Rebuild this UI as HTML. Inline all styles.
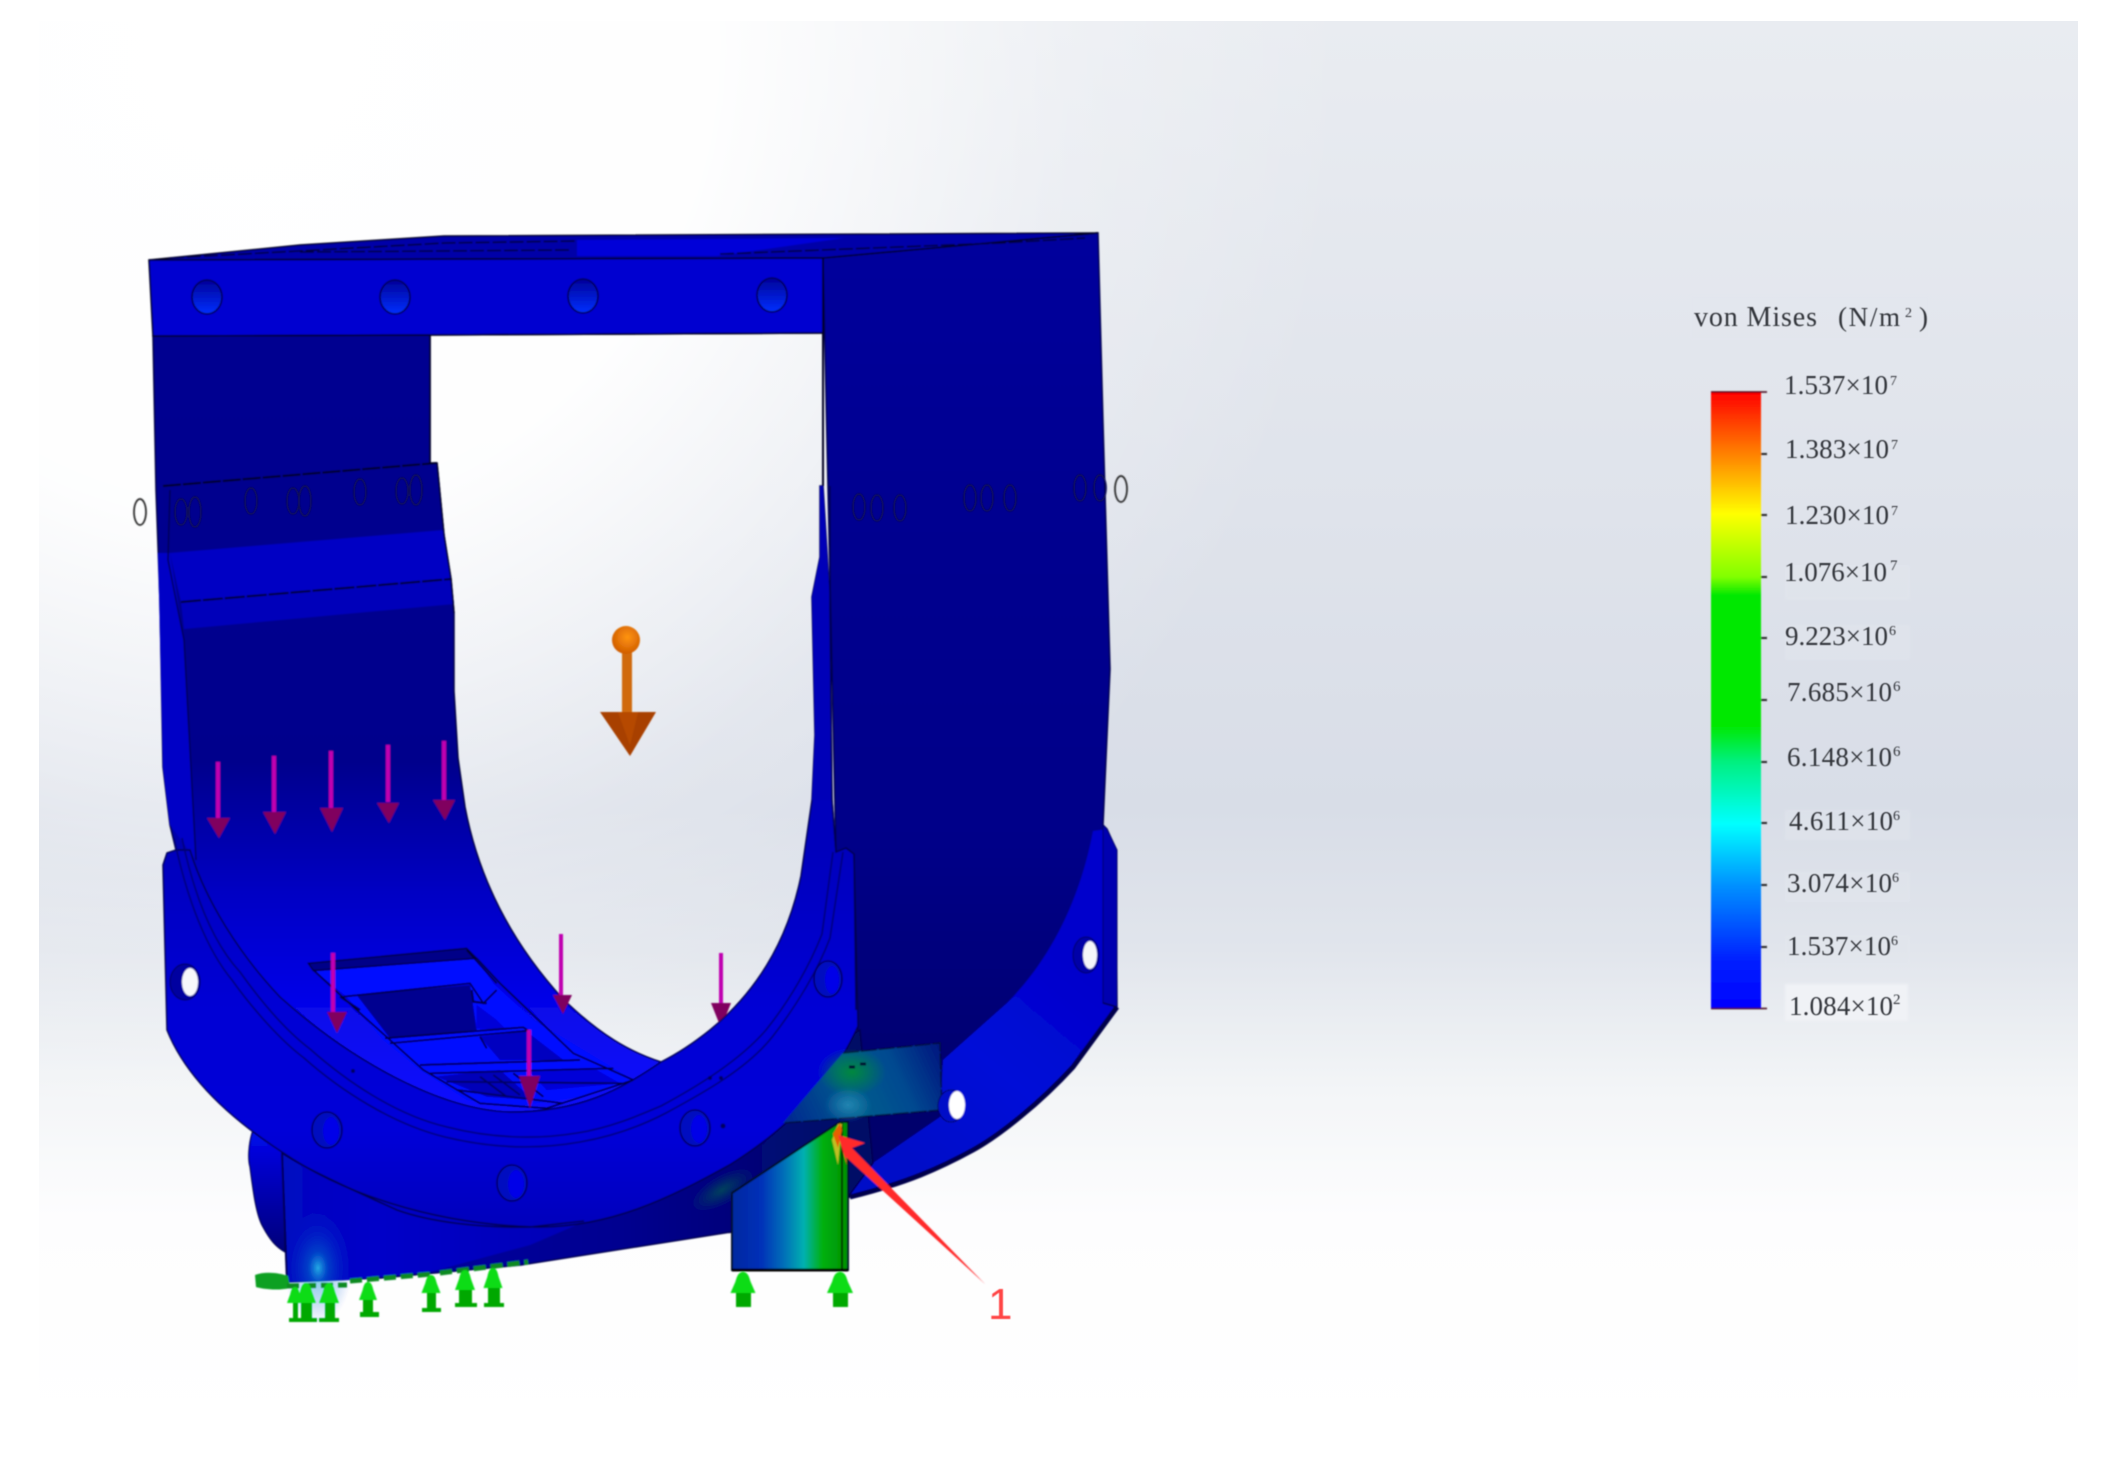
<!DOCTYPE html>
<html><head><meta charset="utf-8"><title>von Mises</title>
<style>html,body{margin:0;padding:0;background:#fff;width:2109px;height:1457px;overflow:hidden}svg{display:block}text{font-family:"Liberation Serif",serif;fill:#33353a}</style></head>
<body>
<svg width="2109" height="1457" viewBox="0 0 2109 1457" xmlns="http://www.w3.org/2000/svg">
<defs>
<linearGradient id="bg" x1="0" y1="21" x2="0" y2="1428" gradientUnits="userSpaceOnUse">
<stop offset="0" stop-color="#e9ecf1"/><stop offset=".35" stop-color="#dfe3eb"/><stop offset=".56" stop-color="#d8dde7"/><stop offset=".66" stop-color="#e1e5ec"/><stop offset=".76" stop-color="#f3f5f7"/><stop offset=".85" stop-color="#fdfdfe"/><stop offset="1" stop-color="#fff"/></linearGradient>
<radialGradient id="hl" cx="250" cy="60" r="1100" gradientUnits="userSpaceOnUse"><stop offset="0" stop-color="#fff"/><stop offset=".42" stop-color="#fff" stop-opacity=".95"/><stop offset=".75" stop-color="#fff" stop-opacity=".25"/><stop offset="1" stop-color="#fff" stop-opacity="0"/></radialGradient>
<linearGradient id="inner" x1="0" y1="336" x2="0" y2="1110" gradientUnits="userSpaceOnUse"><stop offset="0" stop-color="#000090"/><stop offset=".55" stop-color="#00008c"/><stop offset=".72" stop-color="#0000c4"/><stop offset=".86" stop-color="#0606e8"/><stop offset="1" stop-color="#0a0aff"/></linearGradient>
<linearGradient id="fl" x1="0" y1="850" x2="0" y2="1225" gradientUnits="userSpaceOnUse"><stop offset="0" stop-color="#0000bc"/><stop offset=".4" stop-color="#0404d4"/><stop offset=".75" stop-color="#0606d8"/><stop offset="1" stop-color="#0000bc"/></linearGradient>
<linearGradient id="under" x1="381" y1="0" x2="850" y2="0" gradientUnits="userSpaceOnUse"><stop offset="0" stop-color="#0000a0"/><stop offset=".5" stop-color="#000090"/><stop offset="1" stop-color="#000a66"/></linearGradient>
<linearGradient id="wedge" x1="282" y1="0" x2="600" y2="0" gradientUnits="userSpaceOnUse"><stop offset="0" stop-color="#0008c0"/><stop offset=".3" stop-color="#0000c8"/><stop offset="1" stop-color="#0000b4"/></linearGradient>
<linearGradient id="cyl" x1="0" y1="1133" x2="0" y2="1253" gradientUnits="userSpaceOnUse"><stop offset="0" stop-color="#0008ec"/><stop offset=".5" stop-color="#0000b0"/><stop offset="1" stop-color="#000078"/></linearGradient>
<linearGradient id="rear" x1="1060" y1="960" x2="900" y2="1150" gradientUnits="userSpaceOnUse"><stop offset="0" stop-color="#0000cc"/><stop offset=".5" stop-color="#060ed8"/><stop offset="1" stop-color="#0008c8"/></linearGradient>
<linearGradient id="back" x1="0" y1="240" x2="0" y2="1100" gradientUnits="userSpaceOnUse"><stop offset="0" stop-color="#00009c"/><stop offset=".3" stop-color="#000090"/><stop offset=".7" stop-color="#000088"/><stop offset="1" stop-color="#00006c"/></linearGradient>
<linearGradient id="sup" x1="732" y1="0" x2="848" y2="0" gradientUnits="userSpaceOnUse"><stop offset="0" stop-color="#0028a0"/><stop offset=".25" stop-color="#0030b8"/><stop offset=".45" stop-color="#0070b8"/><stop offset=".62" stop-color="#00b0b0"/><stop offset=".78" stop-color="#00b010"/><stop offset="1" stop-color="#009000"/></linearGradient>
<linearGradient id="plate" x1="790" y1="1120" x2="940" y2="1050" gradientUnits="userSpaceOnUse"><stop offset="0" stop-color="#002a90"/><stop offset=".4" stop-color="#005c8c"/><stop offset=".7" stop-color="#004a90"/><stop offset="1" stop-color="#001880"/></linearGradient>
<linearGradient id="bar" x1="0" y1="392" x2="0" y2="1009" gradientUnits="userSpaceOnUse"><stop offset="0" stop-color="#ff0000"/><stop offset=".1" stop-color="#ff8000"/><stop offset=".198" stop-color="#ffff00"/><stop offset=".3" stop-color="#80ff00"/><stop offset=".33" stop-color="#00e800"/><stop offset=".54" stop-color="#00e800"/><stop offset=".6" stop-color="#00f080"/><stop offset=".7" stop-color="#00ffff"/><stop offset=".8" stop-color="#0090ff"/><stop offset=".92" stop-color="#0020ff"/><stop offset="1" stop-color="#0000ff"/></linearGradient>
<linearGradient id="hole" x1="0" y1="0" x2="0" y2="1"><stop offset="0" stop-color="#000098"/><stop offset="1" stop-color="#0030ff"/></linearGradient>
<radialGradient id="ball" cx=".55" cy=".4" r=".6"><stop offset="0" stop-color="#ff9410"/><stop offset="1" stop-color="#d05c00"/></radialGradient>
<radialGradient id="teal" cx=".5" cy=".5" r=".5"><stop offset="0" stop-color="#30e0f0" stop-opacity=".95"/><stop offset=".3" stop-color="#0090d0" stop-opacity=".5"/><stop offset="1" stop-color="#0040d0" stop-opacity="0"/></radialGradient>
<radialGradient id="grn" cx=".5" cy=".5" r=".5"><stop offset="0" stop-color="#009030" stop-opacity=".85"/><stop offset="1" stop-color="#009030" stop-opacity="0"/></radialGradient>
<radialGradient id="cy2" cx=".5" cy=".5" r=".5"><stop offset="0" stop-color="#3098c0" stop-opacity=".7"/><stop offset="1" stop-color="#3098c0" stop-opacity="0"/></radialGradient>
<filter id="b" x="-5%" y="-5%" width="110%" height="110%"><feGaussianBlur stdDeviation=".7"/></filter>
<filter id="b2" x="-10%" y="-10%" width="120%" height="120%"><feGaussianBlur stdDeviation="1.4"/></filter>
<filter id="b3" x="-5%" y="-5%" width="110%" height="110%"><feGaussianBlur stdDeviation=".45"/></filter>
<path id="gh" d="M0,0 C4,0 5,5 6,9 L10,20 L-10,20 L-6,9 C-5,5 -4,0 0,0 Z" fill="#10dc18"/>
</defs>
<rect width="2109" height="1457" fill="#fff"/>
<rect x="39" y="21" width="2039" height="1407" fill="url(#bg)"/>
<rect x="39" y="21" width="2039" height="1407" fill="url(#hl)"/>
<g fill="#e3e7ee" opacity=".45" filter="url(#b2)">
<rect x="1690" y="295" width="240" height="45"/><rect x="1785" y="565" width="125" height="35"/><rect x="1785" y="625" width="125" height="35"/><rect x="1785" y="810" width="125" height="30"/><rect x="1785" y="872" width="125" height="30"/><rect x="1785" y="935" width="125" height="30"/></g>
<rect x="1785" y="984" width="123" height="37" fill="#f0f2f6" filter="url(#b2)"/>

<g filter="url(#b)">
<!-- back panel -->
<path d="M823,258 L1098,233 L1103,423 L1110,669 L1103,825 L1107,829 L1116,850 L1117,1007 L1073,1067 C1040,1103 1000,1135 973,1150 C940,1168 907,1183 850,1197 L731,1232 L848,1100 L858,1026 L836,852 Z" fill="url(#back)" stroke="#000050" stroke-width="1.5"/>
<!-- rear crescent -->
<path d="M1093,831 L1107,829 L1116,850 L1117,1007 L1073,1067 C1040,1103 1000,1135 973,1150 C940,1168 907,1183 850,1197 L847,1177 L873,1163 L940,1117 L943,1060 L1007,1003 C1050,960 1080,900 1093,831 Z" fill="url(#rear)"/>
<path d="M1117,1007 L1073,1067 C1040,1103 1000,1135 973,1150 C940,1168 907,1183 850,1197" fill="none" stroke="#00004c" stroke-width="5"/>
<path d="M1103,825 L1107,829 L1117,850 L1117,1007 L1103,1003 Z" fill="#0000b0" stroke="#000060" stroke-width="1"/>
<path d="M1103,1003 L1117,1007" stroke="#000050" stroke-width="1.5"/>
<!-- left cylinder behind -->
<path d="M253,1130 C248,1145 248,1160 250,1167 C253,1190 256,1215 263,1227 C270,1240 276,1247 285,1252 L284,1150 Z" fill="url(#cyl)" stroke="#000050" stroke-width="1.2"/>
<!-- under flange -->
<path d="M282,1153 L287,1282 L381,1278 L521,1265 L731,1232 L848,1197 L873,1163 L860,1030 L600,1180 Z" fill="url(#under)" stroke="#000050" stroke-width="1.5"/>
<path d="M282,1153 L287,1282 L347,1280 L430,1272 L530,1245 L600,1215 L600,1180 Z" fill="url(#wedge)"/>
<ellipse cx="318" cy="1268" rx="34" ry="56" fill="url(#teal)" opacity=".8"/>
<ellipse cx="722" cy="1190" rx="34" ry="14" fill="url(#grn)" opacity=".5" transform="rotate(-30 722 1190)"/>
<path d="M282,1153 L287,1282" stroke="#000050" stroke-width="2"/>
<!-- top surface -->
<path d="M149,260 L300,245 L444,236 L1098,233 L823,258 Z" fill="#0000a8" stroke="#000020" stroke-width="1.5"/>
<path d="M577,240 L844,238 L717,256 L577,256 Z" fill="#0000d8"/>
<path d="M170,258 L445,243 L577,241 M720,254 L1000,243 L1085,238 M300,252 L570,250" stroke="#000040" stroke-width="1.6" fill="none" stroke-dasharray="14 3"/>
<!-- left interior -->
<path d="M153,336 L430,335 L430,463 L437,463 L444,535 L451,579 L454,613 L454,691 L458,758 L465,807 C475,860 500,930 563,999 C600,1035 630,1052 661,1062 L680,1120 L300,1110 L200,950 L170,825 L163,767 L160,602 L156,490 Z" fill="url(#inner)" stroke="#000040" stroke-width="1.5"/>
<!-- bracket bands -->
<path d="M163,486 L437,463 L444,530 L170,553 Z" fill="#00008e"/>
<path d="M163,486 L437,463" stroke="#000020" stroke-width="2" stroke-dasharray="18 2" fill="none"/>
<path d="M170,553 L444,530 L451,579 L181,602 Z" fill="#0000c4"/>
<path d="M181,602 L451,579 L454,604 L184,629 Z" fill="#0000ba"/>
<path d="M181,602 L451,579" stroke="#000030" stroke-width="2" fill="none" stroke-dasharray="20 2"/>
<path d="M158,553 L163,767 L170,825 L196,860 L184,640 L170,553 Z" fill="#0000c6"/>
<path d="M170,490 L168,560 L184,640 L196,860" stroke="#000050" stroke-width="1.4" fill="none"/>
<path d="M437,463 L444,535 L451,579 L454,613" stroke="#000020" stroke-width="1.5" fill="none"/>
<!-- arrow partly hidden behind flange -->
<path d="M721,953V1005" stroke="#c000b0" stroke-width="4"/><path d="M711,1003H731L721,1028Z" fill="#80005e"/>
<!-- right inner strip + front flange -->
<path d="M167,853 L163,865 L167,1030 C185,1075 225,1115 282,1152 C340,1192 430,1224 535,1227 C610,1228 670,1198 731,1164 C785,1130 832,1085 858,1026 L854,854 L846,848 L836,852 L832,800 L830,602 L823,486 L820,486 L820,557 L812,597 L815,735 L812,800 L801,876 C790,930 765,985 710,1030 C690,1046 675,1055 661,1062 C620,1090 580,1112 510,1112 C440,1110 350,1060 280,997 C240,955 205,900 190,850 L176,850 Z" fill="url(#fl)" stroke="#000050" stroke-width="1.5"/>
<path d="M823,486 L820,486 L820,557 L812,597 L815,735 L812,800 L830,800 L830,602 Z" fill="#0000b8"/>
<path d="M830,486 L830,610 L832,800 L836,852" stroke="#000050" stroke-width="1.4" fill="none"/>
<path d="M182,838 C195,900 215,945 240,972 C260,1000 285,1030 310,1049 C345,1080 395,1115 447,1127 C490,1138 535,1140 577,1133 C610,1128 640,1115 661,1106 C700,1085 740,1060 766,1030 C790,1000 810,965 822,934 L833,852" stroke="#000078" stroke-width="1.6" fill="none"/>
<path d="M174,838 C187,900 207,950 232,980 C252,1008 280,1040 304,1058 C340,1090 392,1124 445,1137 C490,1148 535,1150 580,1142 C615,1136 645,1124 666,1113 C705,1092 748,1068 773,1036 C797,1005 818,970 830,938 L843,852" stroke="#000078" stroke-width="1.6" fill="none"/>
<path d="M282,1153 C300,1165 330,1180 397,1210 C430,1222 480,1228 530,1227 L584,1221" stroke="#000050" stroke-width="1.6" fill="none"/>
<path d="M846,848 L854,854 L856,1010" stroke="#000050" stroke-width="1.5" fill="none"/>

<!-- lower window -->
<g transform="translate(280 940) scale(.33333)">
<path d="M100,90 L585,50 L640,130 L760,240 L1060,420 L900,470 L700,500 L560,480 L420,390 L310,300 L200,170 Z" fill="#0008ff"/>
<path d="M85,70 L560,25 L590,55 L100,92 Z" fill="#000088" stroke="#000030" stroke-width="4"/>
<path d="M230,165 L570,135 L590,270 L330,295 Z" fill="#000090"/>
<path d="M590,195 L650,240 L680,270 L590,265 Z" fill="#0000d8"/>
<path d="M600,290 L740,275 L850,360 L660,360 Z" fill="#0000c0"/>
<path d="M750,395 L950,390 L1020,430 L800,450 Z" fill="#0000d8"/>
<path d="M190,170 L570,130 L610,190 L650,150 M315,295 L730,262 L745,272 L330,310 M420,375 L900,360 M450,400 L1000,385 M500,425 L1030,430 M530,450 L850,490 M600,410 L680,470 M640,405 L720,465 M700,400 L790,470 M100,90 L230,210 L430,390 L600,490 L800,505 L1060,420 M590,55 L660,130 L880,340 L1060,420 M560,30 L650,130 M600,290 L620,325" stroke="#000030" stroke-width="5" fill="none"/>
<path d="M470,410 L620,470 L760,480 L660,390 Z" fill="#000080" opacity=".55"/>
<path d="M180,170 L240,210 M575,150 L580,185 L620,190" stroke="#000040" stroke-width="6" fill="none"/>
</g>

<!-- holes flange -->
<ellipse cx="185" cy="982" rx="15" ry="18" fill="#0000a0" stroke="#000050"/><ellipse cx="190" cy="982" rx="8" ry="14" fill="#f6f7fb"/>
<g fill="#0010c0" stroke="#000060" stroke-width="1.6"><ellipse cx="828" cy="979" rx="14" ry="18"/><ellipse cx="327" cy="1130" rx="15" ry="18"/><ellipse cx="695" cy="1128" rx="15" ry="18"/><ellipse cx="512" cy="1183" rx="15" ry="18"/></g>
<g fill="#0000e8"><ellipse cx="331" cy="1131" rx="8" ry="14"/><ellipse cx="699" cy="1129" rx="8" ry="14"/><ellipse cx="516" cy="1184" rx="8" ry="14"/><ellipse cx="832" cy="980" rx="7" ry="14"/></g>
<ellipse cx="1086" cy="955" rx="13" ry="18" fill="#0000a8" stroke="#000060"/><ellipse cx="1090" cy="955" rx="7" ry="14" fill="#f4f5fa"/>
<g fill="#000060"><circle cx="353" cy="1071" r="2"/><circle cx="710" cy="1078" r="2"/><circle cx="721" cy="1078" r="2"/><circle cx="723" cy="1126" r="2.5"/></g>

<!-- front beam -->
<path d="M149,260 L823,258 L823,333 L430,335 L153,336 Z" fill="#0404d0" stroke="#000020" stroke-width="1.6"/>
<path d="M823,258 L823,486" stroke="#000020" stroke-width="2"/>
<g stroke="#000050" stroke-width="1.6" fill="url(#hole)"><ellipse cx="207" cy="297" rx="15" ry="17"/><ellipse cx="395" cy="297" rx="15" ry="17"/><ellipse cx="583" cy="296" rx="15" ry="17"/><ellipse cx="772" cy="295" rx="15" ry="17"/></g>
<!-- window edges -->
<path d="M430,335 L430,463 M430,335 L823,333" stroke="#000020" stroke-width="1.6" fill="none"/>
<!-- rings -->
<g fill="none" stroke="#0a0a50" stroke-width="1.7">
<ellipse cx="140" cy="512" rx="6" ry="13" stroke="#222"/><ellipse cx="181" cy="512" rx="6" ry="13"/><ellipse cx="195" cy="512" rx="6" ry="15"/><ellipse cx="251" cy="501" rx="6" ry="13"/><ellipse cx="293" cy="501" rx="6" ry="13"/><ellipse cx="305" cy="501" rx="6" ry="15"/><ellipse cx="360" cy="492" rx="6" ry="13"/><ellipse cx="402" cy="491" rx="6" ry="13"/><ellipse cx="416" cy="490" rx="6" ry="15"/>
<ellipse cx="859" cy="507" rx="6" ry="13"/><ellipse cx="877" cy="508" rx="6" ry="13"/><ellipse cx="900" cy="508" rx="6" ry="13"/><ellipse cx="970" cy="498" rx="6" ry="13"/><ellipse cx="987" cy="498" rx="6" ry="13"/><ellipse cx="1010" cy="498" rx="6" ry="13"/><ellipse cx="1080" cy="488" rx="6" ry="13"/><ellipse cx="1100" cy="488" rx="6" ry="13"/><ellipse cx="1121" cy="489" rx="6" ry="13" stroke="#222"/></g>

<!-- orange gravity arrow -->
<rect x="622" y="650" width="10" height="65" fill="#d06a10"/>
<ellipse cx="626" cy="640" rx="14" ry="14" fill="url(#ball)"/>
<path d="M600,712 L656,712 L630,756 Z" fill="#a84000"/>
<path d="M618,712 L638,712 L630,745 Z" fill="#c05000" opacity=".6"/>

<!-- magenta arrows -->
<g stroke="#c000b0" stroke-width="4"><path d="M218,762V820M274,756V812M331,751V808M388,745V802M444,741V800M333,953V1014M561,934V996M529,1030V1078"/></g>
<g fill="#80005e"><path d="M207,818H230L219,838ZM263,812H286L275,834ZM320,808H343L332,832ZM377,803H399L389,823ZM433,800H455L445,820ZM327,1012H347L337,1033ZM553,995H572L563,1014ZM519,1076H540L530,1108Z"/></g>

<!-- plate -->
<path d="M843,1053 L940,1043 L942,1110 L847,1118 L783,1123 Z" fill="url(#plate)"/>
<path d="M843,1053 L940,1043 L942,1110 L847,1118 L783,1123" fill="none" stroke="#001040" stroke-width="1.5" stroke-dasharray="16 2"/>
<ellipse cx="852" cy="1072" rx="34" ry="24" fill="url(#grn)"/>
<ellipse cx="848" cy="1105" rx="24" ry="18" fill="url(#cy2)"/>
<path d="M849,1067h6M860,1064h6" stroke="#001030" stroke-width="3"/>
<ellipse cx="951" cy="1106" rx="13" ry="16" fill="#0010c8" stroke="#000060"/><ellipse cx="957" cy="1105" rx="8" ry="14" fill="#fff"/>

<!-- support -->
<path d="M732,1193 L840,1122 L848,1122 L848,1270 L732,1270 Z" fill="url(#sup)" stroke="#001020" stroke-width="2"/>
<path d="M842,1122 L842,1270" stroke="#003000" stroke-width="2"/>
<path d="M838,1124 L832,1140 L838,1165 L842,1124 Z" fill="#c0c020"/>
<path d="M840,1123 L833,1134 L838,1148 L842,1130 Z" fill="#e86000"/>
<path d="M732,1270 H848" stroke="#000" stroke-width="3"/>

<!-- green -->
<path d="M255,1275 C265,1271 280,1273 288,1276 L290,1288 C278,1291 262,1289 256,1287 Z" fill="#10a020"/>
<path d="M287,1286 L347,1285 M350,1281 L432,1274 M440,1273 L528,1262" stroke="#108a20" stroke-width="5" fill="none" stroke-dasharray="12 5"/>
<g fill="#00a800">
<rect x="293" y="1300" width="5" height="20"/><rect x="301" y="1300" width="11" height="20"/><rect x="289" y="1318" width="28" height="4"/>
<rect x="325" y="1300" width="10" height="20"/><rect x="319" y="1318" width="20" height="4"/>
<rect x="363" y="1298" width="10" height="16"/><rect x="360" y="1312" width="19" height="5"/>
<rect x="427" y="1291" width="9" height="18"/><rect x="422" y="1308" width="19" height="4"/>
<rect x="459" y="1286" width="13" height="18"/><rect x="455" y="1303" width="22" height="4"/>
<rect x="488" y="1286" width="12" height="18"/><rect x="484" y="1303" width="20" height="4"/>
<rect x="736" y="1292" width="15" height="15"/><rect x="833" y="1292" width="15" height="15"/></g>
<use href="#gh" transform="translate(295 1287) scale(.8 .8)"/><use href="#gh" transform="translate(306 1283)"/><use href="#gh" transform="translate(329 1283)"/><use href="#gh" transform="translate(368 1282) scale(.9)"/><use href="#gh" transform="translate(431 1275) scale(.95 .9)"/><use href="#gh" transform="translate(465 1270)"/><use href="#gh" transform="translate(493 1268) scale(.95 1)"/>
<use href="#gh" transform="translate(743 1272) scale(1.25 1.05)"/><use href="#gh" transform="translate(840 1272) scale(1.3 1.05)"/>

<!-- red callout -->
<path d="M838,1135 L865,1143 L852,1148 L985,1284 L846,1157 L847,1165 Z" fill="#ff2a2a"/>
</g>
<text x="988" y="1319" style="font-family:'Liberation Sans',sans-serif;fill:#ff4545" font-size="44" filter="url(#b3)">1</text>

<!-- legend -->
<g filter="url(#b)">
<rect x="1711" y="392" width="50" height="617" fill="url(#bar)"/>
<path d="M1711,392H1767M1711,1008.500H1767" stroke="#400010" stroke-width="1.500" fill="none"/>
<path d="M1761,454h6M1761,515h6M1761,577h6M1761,638h6M1761,700h6M1761,762h6M1761,823h6M1761,885h6M1761,947h6" stroke="#222" stroke-width="2"/>
</g>
<g font-size="27" filter="url(#b3)">
<text x="1694" y="326" font-size="28" textLength="123">von Mises</text>
<text x="1838" y="326" font-size="27" textLength="62">(N/m</text><text x="1905" y="317" font-size="14">2</text><text x="1919" y="326">)</text>
<text x="1784" y="394" textLength="104">1.537×10</text><text x="1890" y="385" font-size="14">7</text>
<text x="1785" y="458" textLength="104">1.383×10</text><text x="1891" y="449" font-size="14">7</text>
<text x="1785" y="524" textLength="104">1.230×10</text><text x="1891" y="515" font-size="14">7</text>
<text x="1784" y="581" textLength="103">1.076×10</text><text x="1890" y="570" font-size="15">7</text>
<text x="1785" y="645" textLength="103">9.223×10</text><text x="1889" y="635" font-size="14">6</text>
<text x="1787" y="701" textLength="105">7.685×10</text><text x="1893" y="691" font-size="15">6</text>
<text x="1787" y="766" textLength="105">6.148×10</text><text x="1893" y="756" font-size="15">6</text>
<text x="1789" y="830" textLength="104">4.611×10</text><text x="1893" y="820" font-size="14">6</text>
<text x="1787" y="892" textLength="105">3.074×10</text><text x="1892" y="882" font-size="14">6</text>
<text x="1787" y="955" textLength="104">1.537×10</text><text x="1891" y="945" font-size="14">6</text>
<text x="1789" y="1015" textLength="104">1.084×10</text><text x="1893" y="1004" font-size="15">2</text>
</g>
</svg>
</body></html>
